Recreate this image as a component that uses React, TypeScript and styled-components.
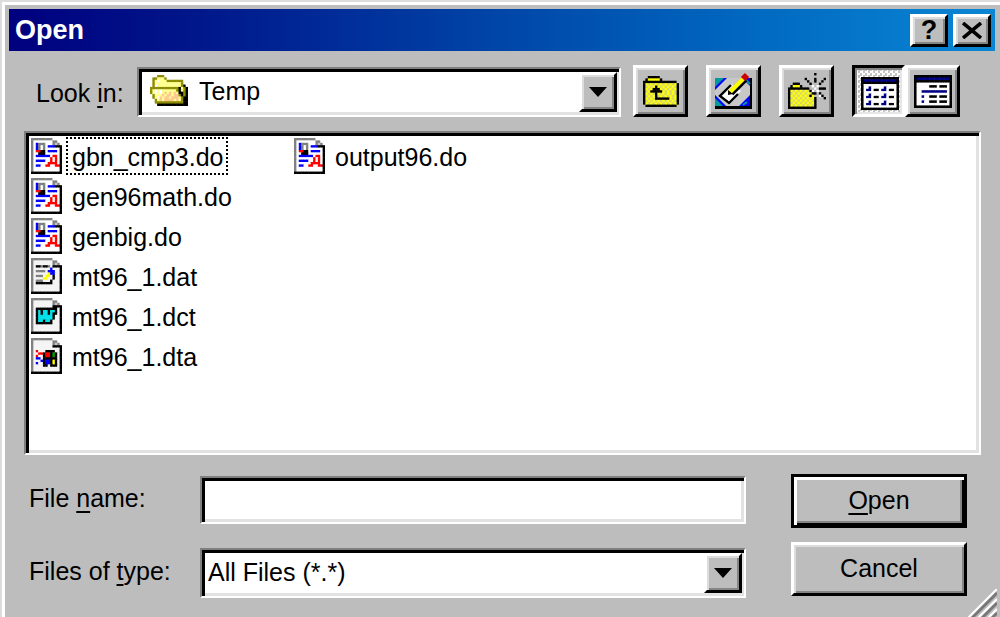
import React from "react";
import styled, { createGlobalStyle, css } from "styled-components";

const face = "#bdbdbd";
const font = `"Liberation Sans", Arial, sans-serif`;

const GlobalStyle = createGlobalStyle`
  *, *::before, *::after { box-sizing: border-box; }
  body { margin: 0; background: ${face}; color: #000; font: 25px/36px ${font}; }
  button, input, select { font: inherit; color: inherit; margin: 0; border-radius: 0; outline: none; }
  u { text-decoration-thickness: 2px; text-underline-offset: 4px; }
`;

const raised = css`
  background: ${face};
  border: 3px solid;
  border-color: #fff #000 #000 #fff;
  box-shadow: inset 2px 2px 0 #dcdcdc, inset -2px -2px 0 #858585;
`;

const sunken = css`
  background: #fff;
  border: 2px solid;
  border-color: #7f7f7f #fff #fff #7f7f7f;
  box-shadow: inset 3px 3px 0 #000, inset -3px -3px 0 #e2e2e2;
`;

const Dialog = styled.main`
  position: relative;
  display: flex;
  flex-direction: column;
  min-height: 100vh;
  padding: 4px 5px 21px 4px;
  background: ${face};
  border-top: 5px solid #fff;
  border-left: 5px solid #fff;
  &::before {
    content: "";
    position: absolute;
    inset: -5px 0 0 -5px;
    border-top: 2px solid #dcdcdc;
    border-left: 2px solid #dcdcdc;
    pointer-events: none;
  }
`;

const TitleBar = styled.header`
  display: flex;
  align-items: center;
  gap: 5px;
  height: 42px;
  padding: 0 4px 0 6px;
  background: linear-gradient(90deg, #00007e 0%, #00188c 20%, #0046a8 50%, #0068c0 75%, #0a86d4 100%);
`;

const Title = styled.h1`
  flex: 1;
  margin: 0;
  color: #fff;
  font: bold 27px/36px ${font};
`;

const CaptionButton = styled.button`
  ${raised}
  display: grid;
  place-items: center;
  width: 38px;
  height: 33px;
  padding: 0;
  font: bold 27px/27px ${font};
`;

const Toolbar = styled.div`
  display: flex;
  align-items: flex-end;
  margin: 14px 35px 0 15px;
`;

const ToolbarLabel = styled.label`
  width: 113px;
  padding: 0 0 6px 12px;
  white-space: nowrap;
`;

const Combo = styled.div`
  position: relative;
  flex: 1;
  min-width: 0;
`;

const Select = styled.select<{ $indent: number }>`
  ${sunken}
  appearance: none;
  display: block;
  width: 100%;
  height: 50px;
  padding: 0 44px 2px ${(p) => p.$indent}px;
`;

const ComboIcon = styled.span`
  position: absolute;
  left: 13px;
  top: 8px;
  display: flex;
  pointer-events: none;
`;

const ComboArrow = styled.span`
  ${raised}
  position: absolute;
  right: 4px;
  top: 5px;
  bottom: 5px;
  display: grid;
  place-items: center;
  width: 38px;
  pointer-events: none;
`;

const Tools = styled.div`
  display: flex;
  gap: 18px;
  margin-left: 12px;
`;

const ToggleGroup = styled.div`
  display: flex;
`;

const ToolButton = styled.button<{ $pressed?: boolean }>`
  ${raised}
  display: grid;
  place-items: center;
  width: 55px;
  height: 52px;
  padding: 0;
  ${(p) =>
    p.$pressed &&
    css`
      padding: 4px 0 0 2px;
      width: 53px;
      border-color: #000 #fff #fff #000;
      box-shadow: inset 2px 2px 0 #858585, inset -2px -2px 0 #e6e6e6;
      background: repeating-conic-gradient(#fff 0 25%, #c4c4c4 0 50%) 0 0 / 5px 5px;
    `}
`;

const FileList = styled.ul`
  ${sunken}
  flex: 1;
  display: grid;
  grid-template-rows: repeat(6, 40px);
  grid-auto-flow: column;
  grid-auto-columns: 263px;
  min-height: 324px;
  margin: 14px 14px 0 15px;
  padding: 3px 4px 0 5px;
  list-style: none;
`;

const FileButton = styled.button`
  display: flex;
  align-items: center;
  height: 40px;
  padding: 0;
  border: 0;
  background: none;
`;

const FileName = styled.span<{ $focused: boolean }>`
  height: 38px;
  padding: 0 2px 0 4px;
  border: 2px dotted ${(p) => (p.$focused ? "#000" : "transparent")};
  white-space: nowrap;
`;

const FileGlyph = styled.span`
  display: flex;
  width: 35px;
`;

const Form = styled.form`
  display: flex;
  gap: 45px;
  margin: 19px 28px 0 20px;
`;

const Fields = styled.div`
  flex: 1;
  display: grid;
  grid-template-columns: 171px minmax(0, 1fr);
  row-gap: 24px;
  align-items: center;
  padding-top: 2px;
`;

const FieldLabel = styled.label`
  padding-bottom: 4px;
  white-space: nowrap;
`;

const TextInput = styled.input`
  ${sunken}
  width: 100%;
  height: 48px;
  padding: 0 8px;
`;

const Actions = styled.div`
  display: flex;
  flex-direction: column;
  gap: 14px;
  width: 176px;
`;

const ActionButton = styled.button<{ $isDefault?: boolean }>`
  ${raised}
  height: 54px;
  padding: 0 0 2px;
  ${(p) =>
    p.$isDefault &&
    css`
      border-color: #000;
      box-shadow: inset 3px 3px 0 #fff, inset -2px -2px 0 #000, inset -4px -4px 0 #858585;
    `}
`;

const Grip = styled.svg`
  position: absolute;
  right: 3px;
  bottom: 0;
`;

const palette: Record<string, string> = {
  K: "#000",
  g: "#808080",
  s: "#c8c8c8",
  w: "#fff",
  f: "#f4f4f4",
  b: "#0000ff",
  n: "#000084",
  r: "#ff0000",
  o: "#8c8c00",
  y: "#ffff00",
  e: "#d8d86c",
  l: "#ffff90",
  p: "#ffc890",
  c: "#00e0e8",
  G: "#00a000",
};

/* Each cell reaches a little under its right and lower neighbours, so no seams show. */
function PixelIcon({ rows, width, height }: { rows: string[]; width: number; height: number }) {
  const filled = (x: number, y: number) => Boolean(rows[y]?.[x]) && rows[y][x] !== ".";
  return (
    <svg
      width={width}
      height={height}
      viewBox={`0 0 ${rows[0].length} ${rows.length}`}
      preserveAspectRatio="none"
      aria-hidden="true"
    >
      {rows.flatMap((row, y) =>
        [...row].map((cell, x) =>
          filled(x, y) ? (
            <rect
              key={`${x}-${y}`}
              x={x}
              y={y}
              width={filled(x + 1, y) ? 1.2 : 1}
              height={filled(x, y + 1) ? 1.2 : 1}
              fill={palette[cell]}
            />
          ) : null
        )
      )}
    </svg>
  );
}

const openFolder = [
  "...ooo..........",
  ".oolllo.........",
  ".olwlllooooooo..",
  ".olllllllllllo..",
  ".owlllllllllloK.",
  "ooooooooooooKloK",
  "olwlwlllllloKloK",
  "olwlwlplplplKKoK",
  ".olllplpplppoKoK",
  ".olwplpplppploKK",
  "..olplpppplploKK",
  "..ooooooooooooKK",
  "...KKKKKKKKKKKKK",
];

const upFolder = [
  "..KKKKK........",
  ".KyyyyyK.......",
  "KKKKKKKKKKKKKK.",
  "KyeyeyeyeyeyeyK",
  "KeyeyKyeyeyeyeK",
  "KyeyKKKyeyeyeyK",
  "KeyKKKKKyeyeyeK",
  "KyeyeKyeyeyeyeK",
  "KeyeyKeyeyeyeyK",
  "KyeyeKKKKKKyeyK",
  "KeyeyeyeyeyeyeK",
  "KyeyeyeyeyeyeyK",
  ".KKKKKKKKKKKKK.",
];

const newFolder = [
  "...........K....",
  "................",
  ".......K...K...K",
  "........K..K..K.",
  "..KKK....K...K..",
  ".KyyyK....w.w...",
  "KKKKKKKKK..w.KKK",
  "KyeyeyeyeKw.w...",
  "KeyeyeyeyeKK.K..",
  "KyeyeyeyeKy..wK.",
  "KeyeyeyeyeyK...K",
  "KyeyeyeyeyeK....",
  "KeyeyeyeyeyK....",
  "KyeyeyeyeyeK....",
  "KKKKKKKKKKKK....",
];

const listView = [
  "KKKKKKKKKKKKKKK",
  "KnnnnnnnnnnnnnK",
  "KKKKKKKKKKKKKKK",
  "KwwwwwwwwwwwwwK",
  "KwwnwwwwwnwwwwK",
  "KwnnwKKwnnwKKwK",
  "KwwwwwwwwwwwwwK",
  "KwwnwwwwwnwwwwK",
  "KwnnwKKwnnwKKwK",
  "KwwwwwwwwwwwwwK",
  "KwwnwwwwwnwwwwK",
  "KwnnwKKwnnwKKwK",
  "KwwwwwwwwwwwwwK",
  "KKKKKKKKKKKKKKK",
];

const detailView = [
  "KKKKKKKKKKKKKKK",
  "KnnnnnnnnnnnnnK",
  "KKKKKKKKKKKKKKK",
  "KwwwwwwwwwwwwwK",
  "KwwwwwKKKwKKKwK",
  "KwwwwwwwwwwwwwK",
  "KwwnnnnnnnnnnwK",
  "KwwwwwwwwwwwwwK",
  "KwwnwwKKKwKKKwK",
  "KwwwwwwwwwwwwwK",
  "KwwnwwKKKwKKKwK",
  "KwwwwwwwwwwwwwK",
  "KKKKKKKKKKKKKKK",
];

const doFile = [
  "ggggggggg....",
  "gwwwwwwwwgg..",
  "gwbgggwwwgsg.",
  "gwbgwgwbbbKKK",
  "gwbgwgwwwwwwK",
  "gwrrKKwbbbbwK",
  "gwwKKKwwwwwwK",
  "gwbbbbbbwrrwK",
  "gwwwwwwwrwrwK",
  "gwbbbbwwrwrwK",
  "gwwwwwwrrrrwK",
  "gwbbwwrrwwrrK",
  "gwwwwwwwwwwwK",
  "gwwwwwwwwwwwK",
  "KKKKKKKKKKKKK",
];

const datFile = [
  "ggggggggg....",
  "gffffffffgg..",
  "gffffffffgsg.",
  "gfKKgKKgfKKKK",
  "gfffffffbfffK",
  "gfggggfbbbffK",
  "gffffffybbffK",
  "gfgggfyyfKffK",
  "gffffyyffKffK",
  "gfgggfffKfffK",
  "gfKKKKKKKfffK",
  "gfffffffffffK",
  "gfffffffffffK",
  "gfffffffffffK",
  "KKKKKKKKKKKKK",
];

const dctFile = [
  "ggggggggg....",
  "gffffffffgg..",
  "gffffffffgsg.",
  "gffffffffKKKK",
  "gfKKKKKKKKKfK",
  "gfKcKccKccKfK",
  "gfKcKccKcKKfK",
  "gfKccccccKffK",
  "gfKccccccKffK",
  "gfKccKccKfffK",
  "gfKKKKKKKfffK",
  "gfffffffffffK",
  "gfffffffffffK",
  "gfffffffffffK",
  "KKKKKKKKKKKKK",
];

const dtaFile = [
  "ggggggggg....",
  "gffffffffgg..",
  "gffffffffgsg.",
  "gffffffffKKKK",
  "gfffffffffffK",
  "gfrfffKKKKffK",
  "gffrrKrrKGKfK",
  "gfrffKrrKGKfK",
  "gfbbfKKKKKKfK",
  "gfffbKbbKyKfK",
  "gfbffKbbKyKfK",
  "gffffKKfKKKfK",
  "gfffffffffffK",
  "gfffffffffffK",
  "KKKKKKKKKKKKK",
];

const files = [
  { name: "gbn_cmp3.do", icon: doFile },
  { name: "gen96math.do", icon: doFile },
  { name: "genbig.do", icon: doFile },
  { name: "mt96_1.dat", icon: datFile },
  { name: "mt96_1.dct", icon: dctFile },
  { name: "mt96_1.dta", icon: dtaFile },
  { name: "output96.do", icon: doFile },
];

function DesktopIcon() {
  return (
    <svg width="38" height="38" viewBox="0 0 38 38" aria-hidden="true">
      <path d="M0 6H37V37H0Z" fill="#000" />
      <path d="M0 6H35V34H0Z" fill="#c8c8c8" />
      <path d="M0 6H11L0 17ZM0 34V23L11 34Z" fill="#009c9c" />
      <path d="M9 6H12L0 18V15ZM0 23L11 34H8L0 26ZM27 6H35V14ZM35 23V34H24Z" fill="#0000ff" />
      <path d="M31 8L35 12M32 30L28 33" stroke="#009c9c" strokeWidth="2" />
      <path d="M5 24L16 12L26 19L14 31Z" fill="#fff" />
      <path d="M16 13L5 24L14 31L23 22" fill="none" stroke="#000" strokeWidth="2.4" />
      <path d="M16 21L30 7" stroke="#000" strokeWidth="6.5" />
      <path d="M15 20L29 6" stroke="#ffff00" strokeWidth="4.5" />
      <path d="M28 7L32 3" stroke="#d00000" strokeWidth="6" />
      <path d="M13 18L13 23L18 22Z" fill="#000" />
    </svg>
  );
}

function Arrow() {
  return (
    <svg width="18" height="10" viewBox="0 0 18 10" aria-hidden="true">
      <path d="M0 0H18L9 10Z" fill="#000" />
    </svg>
  );
}

export default function App() {
  return (
    <>
      <GlobalStyle />
      <Dialog>
        <TitleBar>
          <Title>Open</Title>
          <CaptionButton type="button" aria-label="Help">?</CaptionButton>
          <CaptionButton type="button" aria-label="Close">
            <svg width="20" height="17" viewBox="0 0 20 17" aria-hidden="true">
              <path d="M1 1L19 16M19 1L1 16" stroke="#000" strokeWidth="3.6" />
            </svg>
          </CaptionButton>
        </TitleBar>

        <Toolbar>
          <ToolbarLabel htmlFor="look-in">
            Look <u>i</u>n:
          </ToolbarLabel>
          <Combo>
            <Select id="look-in" $indent={60} defaultValue="Temp">
              <option>Temp</option>
            </Select>
            <ComboIcon>
              <PixelIcon rows={openFolder} width={38} height={31} />
            </ComboIcon>
            <ComboArrow>
              <Arrow />
            </ComboArrow>
          </Combo>
          <Tools>
            <ToolButton type="button" aria-label="Up one level">
              <PixelIcon rows={upFolder} width={36} height={31} />
            </ToolButton>
            <ToolButton type="button" aria-label="View desktop">
              <DesktopIcon />
            </ToolButton>
            <ToolButton type="button" aria-label="Create new folder">
              <PixelIcon rows={newFolder} width={38} height={36} />
            </ToolButton>
            <ToggleGroup>
              <ToolButton type="button" aria-label="List" aria-pressed="true" $pressed>
                <PixelIcon rows={listView} width={38} height={33} />
              </ToolButton>
              <ToolButton type="button" aria-label="Details" aria-pressed="false">
                <PixelIcon rows={detailView} width={38} height={33} />
              </ToolButton>
            </ToggleGroup>
          </Tools>
        </Toolbar>

        <FileList>
          {files.map((file, i) => (
            <li key={file.name}>
              <FileButton type="button">
                <FileGlyph>
                  <PixelIcon rows={file.icon} width={31} height={36} />
                </FileGlyph>
                <FileName $focused={i === 0}>{file.name}</FileName>
              </FileButton>
            </li>
          ))}
        </FileList>

        <Form onSubmit={(e) => e.preventDefault()}>
          <Fields>
            <FieldLabel htmlFor="file-name">
              File <u>n</u>ame:
            </FieldLabel>
            <TextInput id="file-name" type="text" />
            <FieldLabel htmlFor="file-type">
              Files of <u>t</u>ype:
            </FieldLabel>
            <Combo>
              <Select id="file-type" $indent={6} defaultValue="All Files (*.*)">
                <option>All Files (*.*)</option>
              </Select>
              <ComboArrow>
                <Arrow />
              </ComboArrow>
            </Combo>
          </Fields>
          <Actions>
            <ActionButton type="submit" $isDefault>
              <u>O</u>pen
            </ActionButton>
            <ActionButton type="button">Cancel</ActionButton>
          </Actions>
        </Form>

        <Grip width="30" height="30" viewBox="0 0 30 30" aria-hidden="true">
          <path d="M0 30L30 0M10 30L30 10M20 30L30 20" stroke="#fff" strokeWidth="2.2" />
          <path d="M4 30L30 4M14 30L30 14M24 30L30 24" stroke="#787878" strokeWidth="2.8" />
        </Grip>
      </Dialog>
    </>
  );
}
